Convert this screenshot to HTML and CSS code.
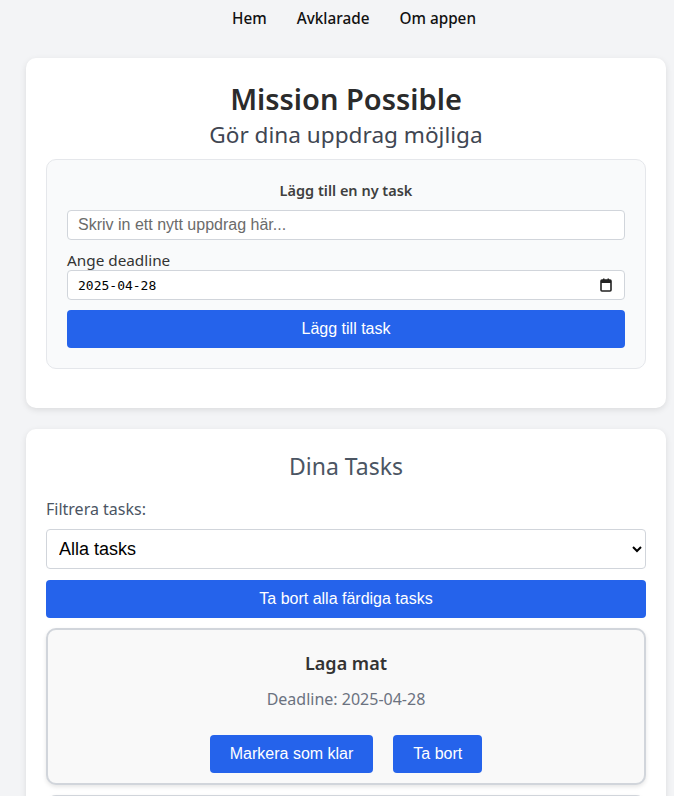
FILE: index.html
```html
<!DOCTYPE html>
<html lang="sv">
<head>
<meta charset="utf-8">
<title>Mission Possible</title>
<link rel="stylesheet" href="styles.css">
</head>
<body>
<nav class="nav">
  <a href="#">Hem</a>
  <a href="#">Avklarade</a>
  <a href="#">Om appen</a>
</nav>
<main class="main">
  <section class="card">
    <h1 class="title">Mission Possible</h1>
    <p class="subtitle">Gör dina uppdrag möjliga</p>
    <div class="form-box">
      <h2 class="form-title">Lägg till en ny task</h2>
      <input class="text-input" type="text" placeholder="Skriv in ett nytt uppdrag här...">
      <label class="label">Ange deadline</label>
      <div class="date-field">
        <input class="date-text" type="text" value="2025-04-28">
        <svg class="cal-icon" width="12" height="14" viewBox="0 0 12 14" aria-hidden="true">
          <rect x="1" y="2" width="10" height="11" rx="1" fill="none" stroke="#222" stroke-width="1.6"/>
          <rect x="1" y="2" width="10" height="3" fill="#222"/>
          <rect x="3" y="0.5" width="1.5" height="2.5" fill="#222"/>
          <rect x="7.5" y="0.5" width="1.5" height="2.5" fill="#222"/>
        </svg>
      </div>
      <button class="btn btn-wide">Lägg till task</button>
    </div>
  </section>
  <section class="card card-tasks">
    <h2 class="tasks-title">Dina Tasks</h2>
    <label class="filter-label">Filtrera tasks:</label>
    <select class="select">
      <option>Alla tasks</option>
    </select>
    <button class="btn btn-wide btn-clear">Ta bort alla färdiga tasks</button>
    <div class="task">
      <h3 class="task-name">Laga mat</h3>
      <p class="task-deadline">Deadline: 2025-04-28</p>
      <div class="task-actions">
        <button class="btn btn-small">Markera som klar</button>
        <button class="btn btn-small">Ta bort</button>
      </div>
    </div>
    <div class="task"></div>
  </section>
</main>
</body>
</html>
```
FILE: styles.css
```css
* { box-sizing: border-box; }
html, body { margin: 0; padding: 0; }
body {
  background: #f3f4f6;
  font-family: "Noto Sans", "Open Sans", sans-serif;
  color: #333;
  overflow: hidden;
  height: 796px;
}
.nav {
  display: flex;
  justify-content: center;
  gap: 30px;
  padding-top: 6px;
  padding-left: 34px;
  height: 58px;
}
.nav a {
  color: #111;
  text-decoration: none;
  font-size: 15.3px;
  font-weight: 500;
  line-height: 24px;
}
.main {
  width: 640px;
  margin-left: 26px;
  display: flex;
  flex-direction: column;
  gap: 21px;
}
.card {
  background: #fff;
  border-radius: 10px;
  padding: 20px 20px 39px;
  box-shadow: 0 2px 6px rgba(0,0,0,0.1);
}
.title {
  margin: 0;
  text-align: center;
  font-size: 29px;
  font-weight: 600;
  line-height: 42px;
  color: #2b2b2b;
}
.subtitle {
  margin: 0 0 9px;
  text-align: center;
  font-size: 22.6px;
  line-height: 30px;
  color: #3f4652;
}
.form-box {
  background: #f9fafb;
  border: 1px solid #e5e7eb;
  border-radius: 10px;
  padding: 18px 20px 20px;
  display: flex;
  flex-direction: column;
}
.form-title {
  margin: 0 0 8px;
  text-align: center;
  font-size: 14.5px;
  font-weight: 600;
  line-height: 24px;
  color: #3f3f3f;
}
.text-input {
  height: 30px;
  border: 1px solid #d1d5db;
  border-radius: 4px;
  padding: 0 10px;
  font-family: "Liberation Sans", Arial, sans-serif;
  font-size: 16px;
  background: #fff;
  margin-bottom: 10px;
}
.text-input::placeholder { color: #6b6b6b; }
.label {
  font-size: 15.3px;
  line-height: 20px;
  color: #333;
}
.date-field {
  height: 30px;
  border: 1px solid #d1d5db;
  border-radius: 4px;
  padding: 0 12px 0 10px;
  background: #fff;
  margin-bottom: 10px;
  display: flex;
  align-items: center;
}
.date-text {
  flex: 1;
  border: none;
  outline: none;
  padding: 0;
  background: transparent;
  font-family: "DejaVu Sans Mono", "Liberation Mono", monospace;
  font-size: 13px;
  color: #000;
}
.cal-icon { flex: none; }
.btn {
  background: #2563eb;
  color: #fff;
  border: none;
  border-radius: 4px;
  font-family: "Liberation Sans", Arial, sans-serif;
  font-size: 16px;
  cursor: pointer;
}
.btn-wide {
  height: 38px;
  width: 100%;
}
.card-tasks {
  padding-top: 20px;
  display: flex;
  flex-direction: column;
}
.tasks-title {
  margin: 0 0 14px;
  text-align: center;
  font-size: 23px;
  font-weight: 400;
  line-height: 34px;
  color: #4b5563;
}
.filter-label {
  font-size: 16px;
  line-height: 24px;
  color: #4b5563;
  margin-bottom: 8px;
}
.select {
  height: 40px;
  border: 1px solid #d1d5db;
  border-radius: 4px;
  padding: 0 8px;
  font-family: "Liberation Sans", Arial, sans-serif;
  font-size: 18px;
  background: #fff;
  color: #000;
  margin-bottom: 11px;
}
.btn-clear { margin-bottom: 10px; }
.task {
  background: #f9f9f9;
  border: 2px solid #d1d5db;
  border-radius: 10px;
  box-shadow: 0 2px 4px rgba(0,0,0,0.1);
  padding: 19px 20px 10px;
  text-align: center;
  margin-bottom: 10px;
  min-height: 157px;
}
.task-name {
  margin: 0;
  font-size: 18px;
  font-weight: 600;
  line-height: 28px;
  color: #333;
}
.task-deadline {
  margin: 10px 0 24px;
  font-size: 16px;
  line-height: 24px;
  color: #6b7280;
}
.task-actions {
  display: flex;
  justify-content: center;
  gap: 20px;
}
.btn-small {
  height: 38px;
  padding: 0 20px;
}
```
